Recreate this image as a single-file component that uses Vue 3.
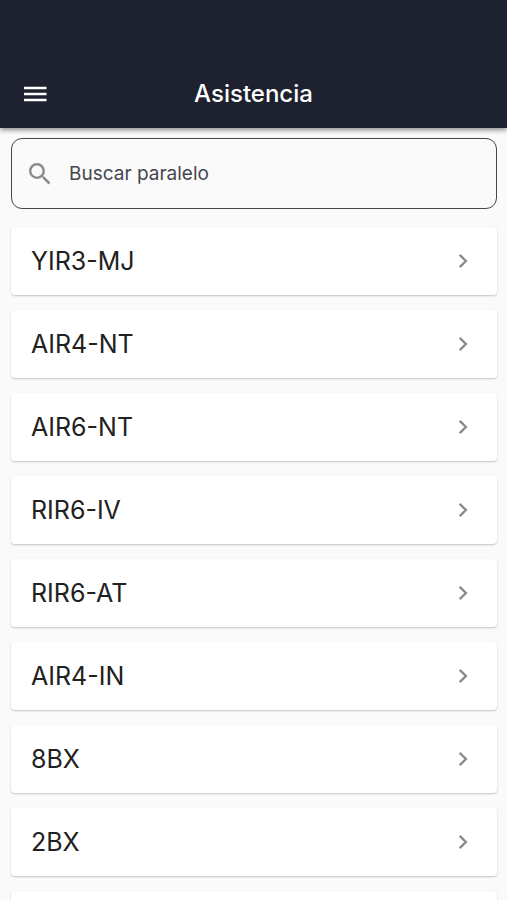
<script setup>
import { computed, ref } from 'vue';

// data
const search = ref('');
const parallels = [
  'YIR3-MJ',
  'AIR4-NT',
  'AIR6-NT',
  'RIR6-IV',
  'RIR6-AT',
  'AIR4-IN',
  '8BX',
  '2BX',
];

// computed
const filteredParallels = computed(() =>
  parallels.filter((item) => item.includes(search.value.trim().toUpperCase()))
);
</script>

<template>
  <div class="page">
    <header class="header">
      <div class="header__bar">
        <button class="header__menu" type="button" aria-label="Menú">
          <svg viewBox="0 0 24 16" width="24" height="16">
            <path d="M1 2h22.5M1 8h22.5M1 14h22.5" stroke="currentColor" stroke-width="2.5" />
          </svg>
        </button>
        <h1 class="header__title">Asistencia</h1>
      </div>
    </header>

    <main class="content">
      <label class="search">
        <svg class="search__icon" viewBox="3 3 18 18" width="22" height="22">
          <path
            fill="currentColor"
            d="M15.5 14h-.79l-.28-.27A6.471 6.471 0 0 0 16 9.5 6.5 6.5 0 1 0 9.5 16c1.61 0 3.09-.59 4.23-1.57l.27.28v.79l5 4.99L20.49 19l-4.99-5zm-6 0C7.01 14 5 11.99 5 9.5S7.01 5 9.5 5 14 7.01 14 9.5 11.99 14 9.5 14z"
          />
        </svg>
        <input
          v-model="search"
          class="search__input"
          type="text"
          placeholder="Buscar paralelo"
          aria-label="Buscar paralelo"
        />
      </label>

      <ul class="list">
        <li v-for="item in filteredParallels" :key="item">
          <button class="list__item" type="button">
            <span>{{ item }}</span>
            <svg class="list__arrow" viewBox="0 0 10 16" width="10" height="16">
              <path d="M1.7 1.8L7.9 8l-6.2 6.2" fill="none" stroke="currentColor" stroke-width="2.4" />
            </svg>
          </button>
        </li>
        <li class="list__item" aria-hidden="true"></li>
      </ul>
    </main>
  </div>
</template>

<style>
html,
body {
  margin: 0;
  height: 100%;
}

#app {
  height: 100%;
}
</style>

<style scoped>
.page {
  display: flex;
  flex-direction: column;
  height: 100%;
  overflow: hidden;
  background-color: #fafafa;
  font-family: Inter, 'Liberation Sans', sans-serif;
  color: #212121;
}

.header {
  flex-shrink: 0;
  padding-top: 60px;
  background-color: #1e2230;
  color: #ffffff;
  box-shadow: 0 2px 5px rgba(0, 0, 0, 0.45);
}

.header__bar {
  display: grid;
  grid-template-columns: 48px 1fr 48px;
  align-items: center;
  height: 68px;
  padding: 0 11px;
}

.header__menu {
  display: flex;
  justify-content: center;
  padding: 12px;
  border: none;
  background: none;
  color: inherit;
  cursor: pointer;
}

.header__title {
  margin: 0;
  font-size: 24px;
  font-weight: 500;
  line-height: 32px;
  text-align: center;
}

.content {
  flex: 1;
  min-height: 0;
  padding: 10px 10px 0 11px;
  overflow: hidden;
}

.search {
  display: flex;
  align-items: center;
  gap: 18px;
  height: 69px;
  padding: 0 17px;
  border: 1px solid #45474e;
  border-radius: 11px;
}

.search__icon {
  flex-shrink: 0;
  color: #8b8b8b;
}

.search__input {
  flex: 1;
  min-width: 0;
  padding: 0;
  border: none;
  outline: none;
  background: none;
  font-family: inherit;
  font-size: 19px;
  line-height: 24px;
  color: #353a46;
}

.search__input::placeholder {
  color: #45474e;
  opacity: 1;
}

.list {
  display: flex;
  flex-direction: column;
  gap: 15px;
  margin: 0;
  padding: 18px 0 0;
  list-style: none;
}

.list__item {
  display: flex;
  align-items: center;
  justify-content: space-between;
  box-sizing: border-box;
  width: 100%;
  height: 68px;
  padding: 0 29px 0 20px;
  border: none;
  border-radius: 4px;
  background-color: #ffffff;
  box-shadow: 0 1px 2px rgba(0, 0, 0, 0.22);
  font-family: inherit;
  font-size: 25px;
  font-weight: 400;
  line-height: 32px;
  color: #212121;
  cursor: pointer;
}

.list__arrow {
  color: #8b8b8b;
}
</style>
